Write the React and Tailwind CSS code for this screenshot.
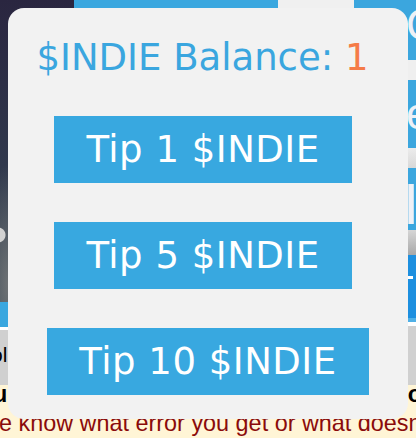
import React from 'react';

const tips = [1, 5, 10];

const TipPopup = ({ balance }) => {
  return (
    <div className="absolute left-[8px] top-[8px] w-[400px] h-[411px] rounded-2xl bg-[#f2f2f2] flex flex-col items-center pt-[28px] font-['DejaVu_Sans',sans-serif]">
      <h2 className="mr-[11px] text-[37px] leading-[43px] text-[#3aa6df] whitespace-nowrap">
        $INDIE Balance: <span className="text-[#f57b47]">{balance}</span>
      </h2>
      {tips.map((amount, i) => (
        <button
          key={amount}
          className={
            (i === 0 ? 'mt-[37px] ' : 'mt-[39px] ') +
            (amount < 10 ? 'mr-[10px] ' : '') +
            'bg-[#38a8e0] text-white text-[37px] leading-[43px] tracking-[0.5px] px-8 py-3 whitespace-nowrap'
          }
        >
          Tip {amount} $INDIE
        </button>
      ))}
    </div>
  );
};

export default function App() {
  return (
    <div className="relative w-[416px] h-[438px] overflow-hidden bg-[#f0f0f0] font-['Liberation_Sans',Arial,sans-serif]">
      {/* page behind the popup */}
      <div className="flex h-[385px]">
        <div className="w-[74px] flex flex-col">
          <div className="h-[302px] bg-[radial-gradient(circle_at_-2px_235px,#d2d2d2_0,#d2d2d2_7px,transparent_8px),radial-gradient(ellipse_at_8px_285px,#6d7174_0,transparent_28px),linear-gradient(to_bottom,#2a2640,#30384c_55%,#3a4955)]" />
          <div className="h-[25px] bg-[#3aa7df]" />
          <div className="h-[3px] bg-white" />
          <div className="flex-1 bg-[#d0d0d0] pt-[13px] text-[21px] leading-[24px] text-black whitespace-nowrap">
            <span className="ml-[-9px]">ol</span>
          </div>
        </div>
        <div className="flex-1 flex flex-col">
          <div className="h-[60px] flex">
            <div className="w-[204px] bg-[#3aa7df]" />
            <div className="flex-1 bg-[#f0f0f0]" />
          </div>
          <div className="flex-1 bg-[#f0f0f0]" />
        </div>
        <div className="w-[62px] flex flex-col text-[#eef1f6] whitespace-nowrap overflow-hidden">
          <div className="h-[60px] bg-[#3ba6de] pl-[52px] pt-[3px] text-[44px] leading-[44px]">C</div>
          <div className="h-[20px] bg-[#efefef]" />
          <div className="h-[68px] bg-[#3ba6de] pl-[52px] pt-[12px] text-[44px] leading-[44px]">e</div>
          <div className="h-[20px] bg-gradient-to-b from-[#ececec] to-[#d8d8d8]" />
          <div className="h-[62px] bg-[#3ba6de] pl-[49px] pt-[7px] text-[58px] leading-[58px]">I</div>
          <div className="h-[25px] bg-gradient-to-b from-[#d6d6d6] to-[#a8a8a8]" />
          <div className="h-[63px] bg-[#1d8fdf] pt-[21px]">
            <div className="ml-[54px] h-[3px] w-[5px] bg-white" />
          </div>
          <div className="h-[4px] bg-[#4fb0e6]" />
          <div className="h-[4px] bg-white" />
          <div className="flex-1 bg-[#d0d0d0]" />
        </div>
      </div>
      <div className="h-[53px] bg-[#fff5d6] text-[23.4px] whitespace-nowrap">
        <div className="flex justify-between h-[18px] leading-[18px] font-bold text-black">
          <span className="ml-[-7px]">u</span>
          <span className="mr-[-6px]">o</span>
        </div>
        <div className="pt-[6px] leading-[28px] text-[#8a0b0b]">
          <span className="ml-[-1px]">e know what error you get or what doesn't work.</span>
        </div>
      </div>

      <TipPopup balance={1} />
    </div>
  );
}
